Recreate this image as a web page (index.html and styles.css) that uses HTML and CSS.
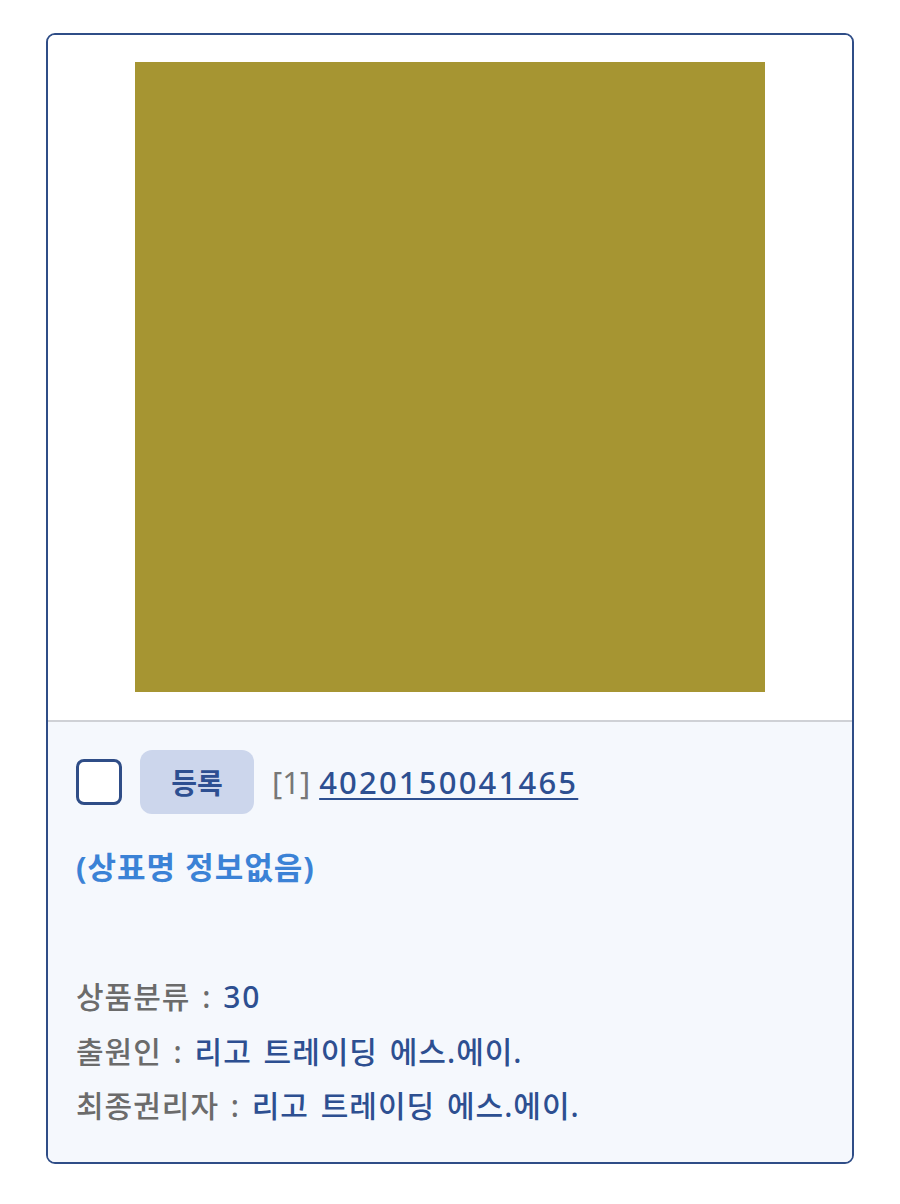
FILE: index.html
```html
<!DOCTYPE html>
<html lang="ko">
<head>
  <meta charset="UTF-8">
  <title>상표 검색 결과</title>
  <link rel="stylesheet" href="styles.css">
</head>
<body>

  <div class="card">
    <div class="card-thumb">
      <div class="mark"></div>
    </div>

    <div class="card-body">
      <div class="head-row">
        <span class="check"></span>
        <span class="status">등록</span>
        <span class="index">[1]</span>
        <a class="appno" href="#">4020150041465</a>
      </div>

      <p class="tm-name">(상표명 정보없음)</p>

      <ul class="info">
        <li><span class="label">상품분류 :</span> <span class="num">30</span></li>
        <li><span class="label">출원인 :</span> 리고 트레이딩 에스.에이.</li>
        <li><span class="label">최종권리자 :</span> 리고 트레이딩 에스.에이.</li>
      </ul>
    </div>
  </div>

</body>
</html>
```

FILE: styles.css
```css
body {
  margin: 0;
  padding: 33px 46px;
  font-family: "Noto Sans", "Noto Sans CJK KR", sans-serif;
  background: #fff;
}

.card {
  border: 2px solid #2f4d87;
  border-radius: 9px;
  overflow: hidden;
}

.card-thumb {
  display: flex;
  justify-content: center;
  padding: 27px 0 28px;
  background: #fff;
  border-bottom: 2px solid #cfd1d6;
}

.mark {
  width: 630px;
  height: 630px;
  background: #a69532;
}

.card-body {
  background: #f5f8fd;
  padding: 28px 28px 28px;
}

.head-row {
  display: flex;
  align-items: center;
  height: 64px;
}

.check {
  width: 40px;
  height: 40px;
  border: 3px solid #2f4d87;
  border-radius: 8px;
  background: #fff;
  margin-right: 18px;
}

.status {
  display: flex;
  align-items: center;
  justify-content: center;
  width: 114px;
  height: 64px;
  border-radius: 12px;
  background: #ccd6ec;
  color: #2d4f91;
  font-size: 28px;
  font-weight: 700;
  margin-right: 18px;
}

.index {
  color: #777;
  font-size: 31px;
  margin-right: 9px;
}

.appno {
  color: #2d4f91;
  font-size: 31px;
  font-weight: 500;
  letter-spacing: 2.2px;
  text-decoration: underline;
  text-decoration-thickness: 2px;
  text-underline-offset: 4px;
}

.tm-name {
  margin: 26px 0 0;
  color: #3b82d6;
  font-size: 31px;
  font-weight: 700;
  letter-spacing: 1px;
  line-height: 54px;
}

.info {
  list-style: none;
  margin: 76px 0 0;
  padding: 0;
  color: #2d4f91;
  font-size: 30px;
  font-weight: 500;
  letter-spacing: 1px;
  word-spacing: 3px;
  line-height: 54.5px;
}

.label {
  color: #6b6b6b;
}

.num {
  letter-spacing: 2px;
}
```
